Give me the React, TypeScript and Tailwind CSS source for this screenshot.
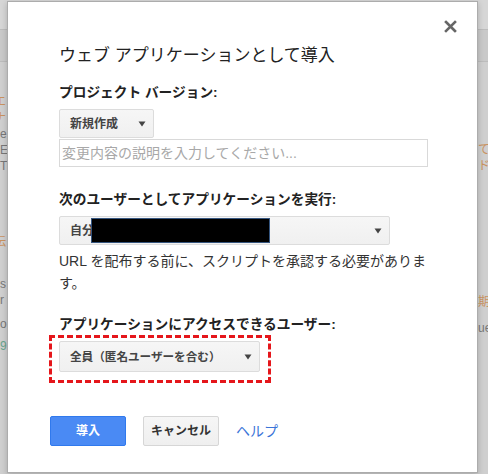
import React from 'react';

const jp = { fontFamily: '"Liberation Sans", "Noto Sans CJK JP", sans-serif' };

const Caret: React.FC = () => (
  <svg width="8" height="6" viewBox="0 0 8 6" className="shrink-0">
    <path d="M0.5 0.5 L7.5 0.5 L4 5.5 Z" fill="#444" />
  </svg>
);

const SelectBox: React.FC<{ label: string; width: string; children?: React.ReactNode }> = ({ label, width, children }) => (
  <div
    className={`relative flex h-[29px] ${width} items-center justify-between rounded-[2px] border border-[#dcdcdc] bg-gradient-to-b from-[#f6f6f6] to-[#f0f0f0] pl-[10px] pr-[7px]`}
  >
    <span className="text-[12px] font-bold text-[#444]">{label}</span>
    <Caret />
    {children}
  </div>
);

export default function App() {
  return (
    <div className="relative h-[474px] w-[488px] overflow-hidden bg-[#cfcfcf]" style={jp}>
      {/* page behind the dialog */}
      <div className="h-[30px] border-b border-[#bcbcbc] bg-[#d6d6d6]" />
      <div className="h-[32px] border-b border-[#bcbcbc] bg-[#c9c9c9]" />
      <div className="flex justify-between">
        <div className="w-[8px] overflow-hidden pt-[32px] text-[12px] leading-[16px]">
          <div className="-ml-[6px] text-[#c9925f]">エ</div>
          <div className="-ml-[6px] text-[#c9925f]">ナ</div>
          <div className="text-[#777]">e</div>
          <div className="text-[#777]">E</div>
          <div className="text-[#777]">T</div>
          <div className="mt-[60px] -ml-[6px] text-[#c9925f]">伝</div>
          <div className="mt-[26px] text-[#777]">s</div>
          <div className="text-[#777]">r</div>
          <div className="mt-[8px] text-[#777]">o</div>
          <div className="mt-[6px] text-[#6aa48c]">9</div>
        </div>
        <div className="w-[10px] overflow-hidden pt-[80px] text-[12px] leading-[16px]">
          <div className="text-[#c9925f]">て</div>
          <div className="text-[#c9925f]">ド</div>
          <div className="mt-[120px] text-[#c9925f]">期</div>
          <div className="mt-[10px] text-[#777]">ue</div>
        </div>
      </div>

      {/* dialog */}
      <div className="absolute left-[7px] top-[1px] h-[472px] w-[471px] border border-[#acacac] bg-white shadow-[0_2px_6px_rgba(0,0,0,0.2)]">
        <button className="absolute right-[20px] top-[18px] p-0">
          <svg width="13" height="13" viewBox="0 0 13 13">
            <path d="M2 2 L11 11 M11 2 L2 11" stroke="#666" strokeWidth="2.6" strokeLinecap="square" />
          </svg>
        </button>

        <div className="pl-[51px] pt-[44px]">
          <h2 className="text-[17px] font-normal leading-[20px] text-[#222]">ウェブ アプリケーションとして導入</h2>

          <div className="mt-[19px] text-[13.7px] font-bold leading-[16px] text-[#222]">プロジェクト バージョン:</div>
          <div className="mt-[8px]">
            <SelectBox label="新規作成" width="w-[95px]" />
          </div>
          <input
            className="mt-[1px] block h-[28px] w-[369px] border border-[#d9d9d9] px-[2px] text-[14px] text-[#333] outline-none placeholder:text-[#a8a8a8]"
            style={jp}
            placeholder="変更内容の説明を入力してください..."
          />

          <div className="mt-[25px] text-[13.7px] font-bold leading-[16px] text-[#222]">次のユーザーとしてアプリケーションを実行:</div>
          <div className="mt-[8px]">
            <SelectBox label="自分" width="w-[331px]">
              <div className="absolute left-[31px] top-[1px] h-[25px] w-[179px] border border-[#35557f] bg-black" />
            </SelectBox>
          </div>
          <p className="mt-[5px] w-[375px] text-[14px] leading-[22px] text-[#333]">
            URL を配布する前に、スクリプトを承認する必要があります。
          </p>

          <div className="mt-[23px] text-[13.7px] font-bold leading-[16px] text-[#222]">アプリケーションにアクセスできるユーザー:</div>
          <div className="-ml-[10px] mt-[2px] inline-block border-[3px] border-dashed border-[#e5161b] pb-[8px] pl-[7px] pr-[8px] pt-[3px]">
            <div className="flex h-[31px] w-[201px] items-center justify-between rounded-[2px] border border-[#dcdcdc] bg-gradient-to-b from-[#f6f6f6] to-[#f0f0f0] pl-[10px] pr-[7px]">
              <span className="text-[11.6px] font-bold text-[#444]">全員（匿名ユーザーを合む）</span>
              <Caret />
            </div>
          </div>

          <div className="-ml-[9px] mt-[33px] flex items-center gap-[17px]">
            <button className="h-[30px] w-[76px] rounded-[2px] border border-[#3079ed] bg-[#4a8af4] text-[12px] font-bold text-white">
              導入
            </button>
            <button className="h-[30px] w-[76px] rounded-[2px] border border-[#d6d6d6] bg-gradient-to-b from-[#f6f6f6] to-[#efefef] text-[12px] font-bold text-[#333]">
              キャンセル
            </button>
            <a className="text-[14px] text-[#3b74d8]">ヘルプ</a>
          </div>
        </div>
      </div>
    </div>
  );
}
